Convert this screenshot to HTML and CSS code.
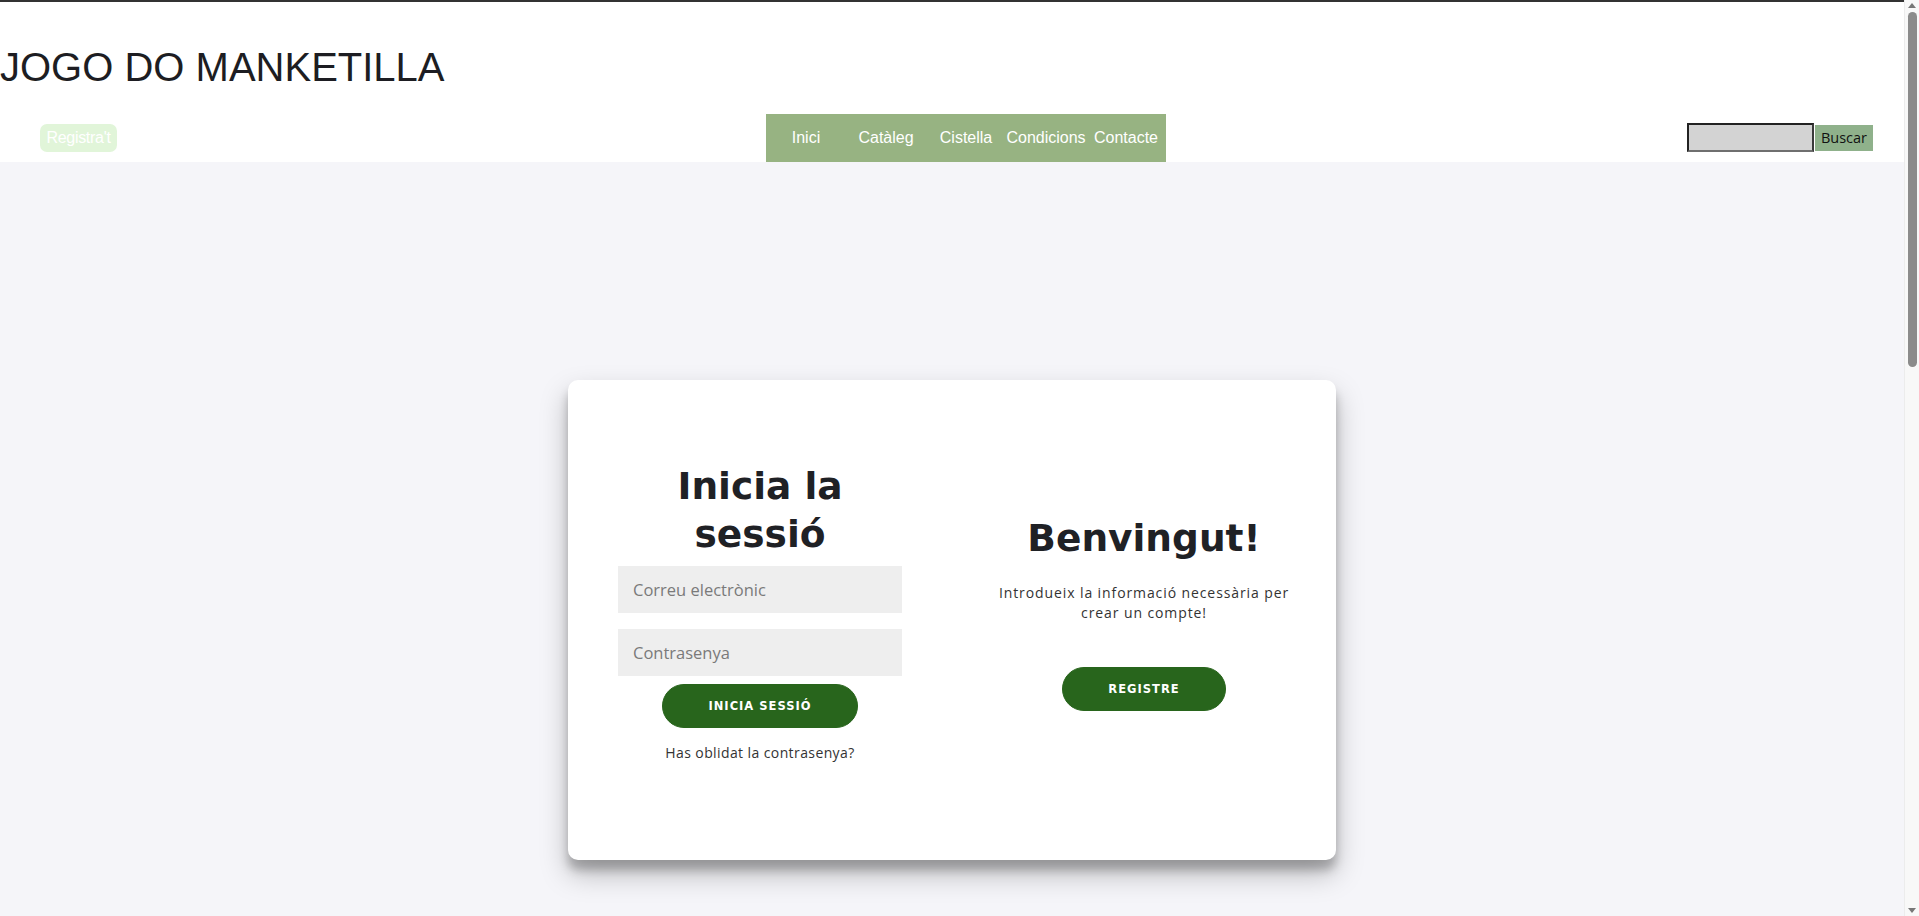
FILE: index.html
```html
<!DOCTYPE html>
<html lang="ca">
<head>
<meta charset="utf-8">
<title>Jogo do Manketilla - Inicia la sessió</title>
<link rel="stylesheet" href="styles.css">
</head>
<body>
<header class="site-header">
  <h1 class="brand">JOGO DO MANKETILLA</h1>
  <div class="nav-row">
    <a class="register-link" href="#">Registra't</a>
    <nav class="menu">
      <ul>
        <li><a href="#">Inici</a></li>
        <li><a href="#">Catàleg</a></li>
        <li><a href="#">Cistella</a></li>
        <li><a href="#">Condicions</a></li>
        <li><a href="#">Contacte</a></li>
      </ul>
    </nav>
    <form class="search">
      <input class="search-input" type="text">
      <button class="search-btn" type="button">Buscar</button>
    </form>
  </div>
</header>
<main class="main">
  <div class="card">
    <form class="panel sign-in">
      <h1 class="title">Inicia la sessió</h1>
      <input class="field" type="email" placeholder="Correu electrònic">
      <input class="field" type="password" placeholder="Contrasenya">
      <button class="pill" type="button">Inicia sessió</button>
      <a class="forgot" href="#">Has oblidat la contrasenya?</a>
    </form>
    <div class="panel welcome">
      <h1 class="title">Benvingut!</h1>
      <p class="intro">Introdueix la informació necessària per crear un compte!</p>
      <button class="pill" type="button">Registre</button>
    </div>
  </div>
</main>
<footer class="footer"></footer>
<div class="scrollbar" aria-hidden="true">
  <span class="sb-arrow sb-up"></span>
  <span class="sb-thumb"></span>
  <span class="sb-arrow sb-down"></span>
</div>
</body>
</html>
```
FILE: styles.css
```css
html {
  background: #f5f5f9;
}
html, body {
  margin: 0;
  padding: 0;
}
body {
  margin-right: 15px;
  border-top: 2px solid #333;
  background: #f5f5f9;
  font-family: "Liberation Sans", Arial, sans-serif;
}
.site-header {
  background: #fff;
  padding-top: 42px;
}
.brand {
  margin: 0 0 24px;
  font-family: "Liberation Sans", Arial, sans-serif;
  font-weight: normal;
  font-size: 40px;
  line-height: 46px;
  color: #1d1d22;
}
.nav-row {
  display: flex;
  align-items: center;
  height: 48px;
  padding: 0 31px 0 40px;
}
.register-link {
  display: block;
  width: 77px;
  height: 28px;
  line-height: 28px;
  text-align: center;
  background: #e1f5d9;
  color: #fff;
  border-radius: 7px;
  font-size: 16px;
  letter-spacing: -0.3px;
  text-decoration: none;
}
.menu {
  margin-left: 649px;
  background: #97b382;
}
.menu ul {
  display: flex;
  list-style: none;
  margin: 0;
  padding: 0;
}
.menu li {
  width: 80px;
  text-align: center;
}
.menu a {
  display: block;
  line-height: 48px;
  color: #fff;
  font-size: 16px;
  text-decoration: none;
}
.search {
  margin-left: auto;
  display: flex;
  align-items: center;
  margin-bottom: 1px;
}
.search-input {
  box-sizing: border-box;
  width: 127px;
  height: 29px;
  background: #d3d3d3;
  border: 2px solid;
  border-color: #222 #3a3a3a #6f6f6f #222;
  margin: 0;
  padding: 0 4px;
}
.search-btn {
  box-sizing: border-box;
  width: 58px;
  height: 26px;
  margin: 0 0 0 1px;
  border: none;
  background: #8fb18b;
  color: #111;
  font-family: "Open Sans", "Noto Sans", sans-serif;
  font-size: 14.5px;
  padding: 0;
}
.main {
  height: 916px;
  display: flex;
  align-items: center;
  justify-content: center;
}
.card {
  width: 768px;
  min-height: 480px;
  background: #fff;
  border-radius: 10px;
  box-shadow: 0 14px 28px rgba(0,0,0,0.25), 0 10px 10px rgba(0,0,0,0.22);
  display: grid;
  grid-template-columns: 1fr 1fr;
}
.panel {
  display: flex;
  flex-direction: column;
  align-items: center;
  justify-content: center;
  text-align: center;
  margin: 0;
}
.sign-in {
  padding: 0 50px;
}
.welcome {
  padding: 0 40px 15px;
}
.title {
  margin: 0;
  font-family: "DejaVu Sans", sans-serif;
  font-weight: bold;
  font-size: 37.5px;
  line-height: 48px;
  color: #1f2125;
}
.field {
  box-sizing: border-box;
  width: 100%;
  height: 47px;
  margin: 8px 0;
  padding: 12px 15px;
  border: none;
  background: #eee;
  font-family: "Open Sans", sans-serif;
  font-size: 16.5px;
  color: #333;
}
.field::placeholder {
  color: #7a7a7a;
}
.pill {
  border-radius: 22px;
  border: 1px solid #28651c;
  background: #28651c;
  color: #fff;
  font-family: "DejaVu Sans", sans-serif;
  font-weight: bold;
  font-size: 11.5px;
  line-height: 18px;
  letter-spacing: 1px;
  text-transform: uppercase;
  padding: 12px 45px;
}
.forgot {
  margin: 15px 0;
  font-family: "Open Sans", sans-serif;
  font-size: 14px;
  line-height: 20px;
  letter-spacing: 0.4px;
  color: #333;
  text-decoration: none;
}
.intro {
  margin: 21px 0 44px;
  font-family: "Open Sans", sans-serif;
  font-size: 14px;
  line-height: 20px;
  letter-spacing: 0.9px;
  color: #333;
}
.footer {
  height: 1220px;
}
.scrollbar {
  position: fixed;
  top: 0;
  right: 0;
  width: 15px;
  height: 100vh;
  background: #f8f8f8;
  border-left: 1px solid #ececec;
  box-sizing: border-box;
}
.sb-thumb {
  position: absolute;
  top: 12px;
  left: 3px;
  width: 9px;
  height: 355px;
  border-radius: 5px;
  background: #8b8b8b;
}
.sb-arrow {
  position: absolute;
  left: 3px;
  width: 0;
  height: 0;
  border-left: 4px solid transparent;
  border-right: 4px solid transparent;
}
.sb-up {
  top: 3px;
  border-bottom: 5px solid #777;
}
.sb-down {
  bottom: 3px;
  border-top: 5px solid #777;
}
```
